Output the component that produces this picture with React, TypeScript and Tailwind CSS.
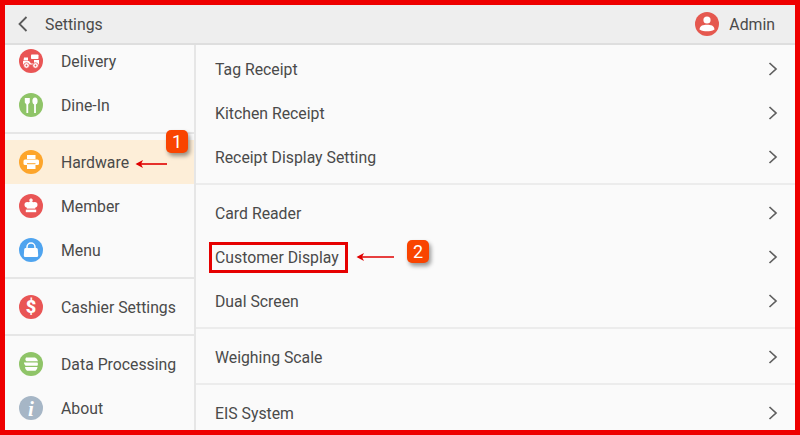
import React from 'react';

const Chevron = () => (
  <svg width="10" height="14" viewBox="0 0 10 14" fill="none" className="absolute right-[17px] top-1/2 -translate-y-1/2">
    <path d="M1.5 1 L8 7 L1.5 13" stroke="#5f5f5f" strokeWidth="1.7" />
  </svg>
);

const Circle = ({ color, children }: { color: string; children: React.ReactNode }) => (
  <svg width="24" height="24" viewBox="0 0 24 24" className="shrink-0">
    <circle cx="12" cy="12" r="12" fill={color} />
    {children}
  </svg>
);

const DeliveryIcon = () => (
  <Circle color="#e95555">
    <rect x="12" y="5.5" width="7.5" height="4.5" rx="0.8" fill="#fff" />
    <path d="M5 8.5 H9 V11.5 H4.5 Z" fill="#fff" />
    <path d="M4 12 H10 L12 14.5 H15 V11 H20 V15.5 H4 Z" fill="#fff" />
    <circle cx="7.5" cy="16.5" r="2.8" fill="#fff" stroke="#e95555" strokeWidth="0.8" />
    <circle cx="7.5" cy="16.5" r="0.9" fill="#e95555" />
    <circle cx="16.5" cy="16.5" r="2.8" fill="#fff" stroke="#e95555" strokeWidth="0.8" />
    <circle cx="16.5" cy="16.5" r="0.9" fill="#e95555" />
  </Circle>
);

const DineIcon = () => (
  <Circle color="#8fc468">
    <path d="M5.8 5 H10.8 V9.5 L9.2 11.5 V20 H7.4 V11.5 L5.8 9.5 Z" fill="#fff" />
    <ellipse cx="16" cy="8" rx="2.6" ry="3.5" fill="#fff" />
    <rect x="15.1" y="10" width="1.8" height="10" fill="#fff" />
  </Circle>
);

const HardwareIcon = () => (
  <Circle color="#fda52b">
    <rect x="8" y="5" width="8.5" height="4" fill="#fff" />
    <rect x="4.5" y="9.5" width="15.5" height="5.5" rx="1.5" fill="#fff" />
    <rect x="8" y="14" width="8.5" height="5" fill="#fff" />
    <rect x="8" y="13.2" width="8.5" height="1" fill="#fda52b" />
  </Circle>
);

const MemberIcon = () => (
  <Circle color="#e95555">
    <rect x="11.2" y="4.5" width="1.6" height="3.5" fill="#fff" />
    <rect x="10.2" y="5.4" width="3.6" height="1.4" fill="#fff" />
    <circle cx="8.3" cy="10.8" r="2.8" fill="#fff" />
    <circle cx="15.7" cy="10.8" r="2.8" fill="#fff" />
    <circle cx="12" cy="10" r="2.8" fill="#fff" />
    <rect x="7.8" y="11" width="8.4" height="3.6" fill="#fff" />
    <rect x="6.8" y="15.6" width="10.4" height="2.6" fill="#fff" />
  </Circle>
);

const MenuIcon = () => (
  <Circle color="#4fa4ef">
    <path d="M8 11 V9 a4 4 0 0 1 8 0 V11" fill="none" stroke="#fff" strokeWidth="1.5" />
    <path d="M6.5 10 H17.5 Q18.8 10 18.8 11.5 L19.2 17.5 Q19.2 19 17.8 19 H6.2 Q4.8 19 4.8 17.5 L5.2 11.5 Q5.2 10 6.5 10 Z" fill="#fff" />
  </Circle>
);

const CashierIcon = () => (
  <Circle color="#e95555">
    <text x="12" y="18.2" textAnchor="middle" fontSize="18" fontWeight="900" fill="#fff" fontFamily="Roboto, sans-serif">$</text>
  </Circle>
);

const DataIcon = () => (
  <Circle color="#8fc468">
    <path d="M7 5.5 H16 Q18.5 6.5 19 9.2 H7.5 Q5.5 8 7 5.5 Z" fill="#fff" />
    <path d="M5 10.5 H18.5 Q19.5 12 18.5 13.8 H6.5 Q4.8 12 5 10.5 Z" fill="#fff" />
    <path d="M6 15 H18.5 Q18.5 17 16.5 18.8 H8 Q6 17.5 6 15 Z" fill="#fff" />
  </Circle>
);

const AboutIcon = () => (
  <Circle color="#a6b6c6">
    <text x="12" y="19.5" textAnchor="middle" fontSize="21" fontWeight="700" fontStyle="italic" fill="#fff" fontFamily="'Liberation Serif', serif">i</text>
  </Circle>
);

const SideRow = ({ icon, label, active }: { icon: React.ReactNode; label: string; active?: boolean }) => (
  <div className={`flex h-[44px] items-center gap-[18px] pl-[14px] ${active ? 'bg-[#fdeed8]' : ''}`}>
    {icon}
    <span className="pt-[1px] text-[15.8px] text-[#4a4a4a]">{label}</span>
  </div>
);

const SideLine = () => <div className="mt-[5px] mb-[6px] h-[2px] bg-[#e6e6e6]" />;

const ListRow = ({ label }: { label: string }) => (
  <div className="relative flex h-[44px] items-center pl-[19px] text-[15.8px] text-[#4a4a4a]">
    <span className="pt-[1px]">{label}</span>
    <Chevron />
  </div>
);

const ListLine = () => <div className="mt-[4px] mb-[6px] h-[2px] bg-[#ececec]" />;

const Badge = ({ n, className }: { n: string; className: string }) => (
  <div className={`absolute flex h-[23px] w-[22px] items-center justify-center rounded-[5px] bg-[#f94400] text-[18px] text-white shadow-[2px_3px_4px_rgba(0,0,0,0.4)] ${className}`}>
    {n}
  </div>
);

const Arrow = ({ className, width }: { className: string; width: number }) => (
  <svg width={width} height="10" viewBox={`0 0 ${width} 10`} fill="none" className={`absolute ${className}`}>
    <path d={`M2 5 H${width}`} stroke="#e00000" strokeWidth="1.6" />
    <path d="M0.5 5 L8 1 L6 5 L8 9 Z" fill="#e00000" />
  </svg>
);

export default function App() {
  return (
    <div className="relative flex h-[435px] w-[800px] flex-col overflow-hidden border-[5px] border-[#ee0000] bg-[#fafafa] font-['Roboto',sans-serif]">
      <header className="flex h-[40px] shrink-0 items-center border-b-2 border-[#dedede] bg-[#eeeeee] pr-[20px]">
        <svg width="10" height="16" viewBox="0 0 10 16" fill="none" className="ml-[13px]">
          <path d="M8.5 1 L1.5 8 L8.5 15" stroke="#5a5a5a" strokeWidth="1.8" />
        </svg>
        <span className="ml-[17px] pt-[1px] text-[15.8px] text-[#4a4a4a]">Settings</span>
        <svg width="24" height="24" viewBox="0 0 24 24" className="ml-auto">
          <circle cx="12" cy="12" r="12" fill="#e5584f" />
          <circle cx="12" cy="8" r="3.6" fill="#fff" />
          <path d="M4.5 17.5 C5 13.5 8 12.8 12 12.8 C16 12.8 19 13.5 19.5 17.5 C17 19 14.5 19.3 12 19.3 C9.5 19.3 7 19 4.5 17.5 Z" fill="#fff" />
        </svg>
        <span className="ml-[10px] pt-[1px] text-[15.8px] text-[#4a4a4a]">Admin</span>
      </header>

      <div className="flex min-h-0 flex-1">
        <aside className="w-[191px] shrink-0 overflow-hidden border-r-2 border-[#e6e6e6] bg-[#fafafa]">
          <div className="-mt-[6px]">
            <SideRow icon={<DeliveryIcon />} label="Delivery" />
            <SideRow icon={<DineIcon />} label="Dine-In" />
            <SideLine />
            <SideRow icon={<HardwareIcon />} label="Hardware" active />
            <SideRow icon={<MemberIcon />} label="Member" />
            <SideRow icon={<MenuIcon />} label="Menu" />
            <SideLine />
            <SideRow icon={<CashierIcon />} label="Cashier Settings" />
            <SideLine />
            <SideRow icon={<DataIcon />} label="Data Processing" />
            <SideRow icon={<AboutIcon />} label="About" />
          </div>
        </aside>

        <main className="min-w-0 flex-1 overflow-hidden pt-[2px]">
          <ListRow label="Tag Receipt" />
          <ListRow label="Kitchen Receipt" />
          <ListRow label="Receipt Display Setting" />
          <ListLine />
          <ListRow label="Card Reader" />
          <ListRow label="Customer Display" />
          <ListRow label="Dual Screen" />
          <ListLine />
          <ListRow label="Weighing Scale" />
          <ListLine />
          <ListRow label="EIS System" />
        </main>
      </div>

      {/* annotations */}
      <Badge n="1" className="left-[161px] top-[125px]" />
      <Arrow className="left-[130px] top-[154px]" width={32} />
      <div className="absolute left-[204px] top-[237px] h-[31px] w-[139px] border-[3px] border-[#e60000]" />
      <Arrow className="left-[351px] top-[247px]" width={38} />
      <Badge n="2" className="left-[402px] top-[235px]" />
    </div>
  );
}
